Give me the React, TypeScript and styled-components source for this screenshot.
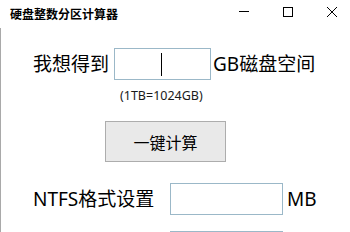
import styled, { createGlobalStyle } from 'styled-components'

const Global = createGlobalStyle`
	html, body {
		margin: 0;
		padding: 0;
		background: #ffffff;
	}
	body {
		font-family: 'Noto Sans', 'Noto Sans CJK SC', sans-serif;
		color: #000000;
	}
`

export default function App() {
	return (
		<>
			<Global />
			<Window>
				<TitleBar>
					<Title>硬盘整数分区计算器</Title>
					<Controls>
						<CtrlButton aria-label='minimize'>
							<svg width='10' height='10' viewBox='0 0 10 10'>
								<path d='M0 4.5h10' stroke='#000' strokeWidth='1' />
							</svg>
						</CtrlButton>
						<CtrlButton aria-label='maximize'>
							<svg width='10' height='10' viewBox='0 0 10 10'>
								<rect
									x='0.5'
									y='0.5'
									width='9'
									height='9'
									fill='none'
									stroke='#000'
									strokeWidth='1'
								/>
							</svg>
						</CtrlButton>
						<CtrlButton aria-label='close'>
							<svg width='10' height='10' viewBox='0 0 10 10'>
								<path
									d='M0 0L10 10M10 0L0 10'
									stroke='#000'
									strokeWidth='1'
								/>
							</svg>
						</CtrlButton>
					</Controls>
				</TitleBar>
				<Body>
					<Row $top={20}>
						<Label>我想得到</Label>
						<TextBox $width={97} $gapLeft={5}>
							<Caret />
						</TextBox>
						<Unit $gapLeft={2}>GB磁盘空间</Unit>
					</Row>
					<Hint>(1TB=1024GB)</Hint>
					<ActionButton type='button'>一键计算</ActionButton>
					<Row $top={21}>
						<Label $width={120}>NTFS格式设置</Label>
						<TextBox $width={113} $gapLeft={17} />
						<Unit $gapLeft={4}>MB</Unit>
					</Row>
					<Row $top={16}>
						<Label $width={120} $hidden>
							FAT32格式设置
						</Label>
						<TextBox $width={113} $gapLeft={17} />
					</Row>
				</Body>
			</Window>
		</>
	)
}

const Window = styled.div`
	width: 350px;
	height: 232px;
	overflow: hidden;
	background: #ffffff;
`

const TitleBar = styled.div`
	height: 28px;
	display: flex;
	align-items: flex-start;
	justify-content: space-between;
`

const Title = styled.div`
	padding: 7px 0 0 10px;
	font-size: 12px;
	font-weight: 700;
	line-height: 16px;
`

const Controls = styled.div`
	display: flex;
	padding-top: 7px;
	padding-right: 13px;
	gap: 34px;
`

const CtrlButton = styled.div`
	width: 10px;
	height: 10px;
	display: flex;

	svg {
		display: block;
		shape-rendering: crispEdges;
	}
`

const Body = styled.div`
	height: 204px;
	border-left: 1px solid #a9a9a9;
	display: flex;
	flex-direction: column;
	align-items: flex-start;

	& > * {
		flex-shrink: 0;
	}
`

const Row = styled.div<{ $top: number }>`
	margin-top: ${(p) => p.$top}px;
	padding-left: 32px;
	display: flex;
	align-items: center;
	height: 32px;
`

const Label = styled.span<{ $hidden?: boolean; $width?: number }>`
	font-size: 19px;
	line-height: 32px;
	white-space: nowrap;
	visibility: ${(p) => (p.$hidden ? 'hidden' : 'visible')};
	${(p) => (p.$width ? `width: ${p.$width}px;` : '')}
`

const Unit = styled.span<{ $gapLeft: number }>`
	margin-left: ${(p) => p.$gapLeft}px;
	font-size: 19px;
	line-height: 32px;
	white-space: nowrap;
`

const TextBox = styled.div<{ $width: number; $gapLeft: number }>`
	box-sizing: border-box;
	width: ${(p) => p.$width}px;
	height: 32px;
	margin-left: ${(p) => p.$gapLeft}px;
	border: 1px solid #9bb8c8;
	background: #ffffff;
	display: flex;
	align-items: center;
	justify-content: center;
`

const Caret = styled.span`
	width: 1px;
	height: 23px;
	background: #000000;
	margin-right: 2px;
`

const Hint = styled.div`
	margin-top: 8px;
	padding-left: 119px;
	font-size: 12.5px;
	line-height: 16px;
	color: #1a1a1a;
`

const ActionButton = styled.button`
	margin-top: 17px;
	margin-left: 104px;
	box-sizing: border-box;
	width: 121px;
	height: 41px;
	border: 1px solid #adadad;
	border-radius: 0;
	background: #e9e9e9;
	font-family: 'Noto Sans', 'Noto Sans CJK SC', sans-serif;
	font-size: 16px;
	color: #000000;
	padding: 0;
`
